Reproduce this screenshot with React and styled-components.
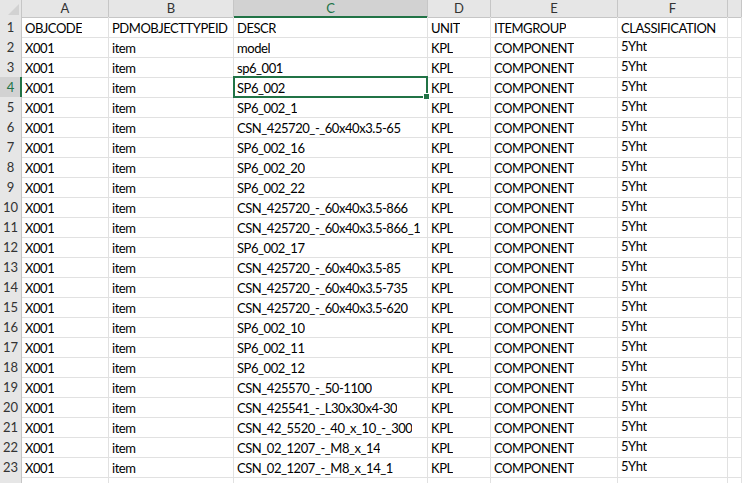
import React from "react";
import styled, { createGlobalStyle, css } from "styled-components";

const GREEN = "#217346";
const GRID = "#e1e1e1";
const HEAD_BORDER = "#c6c6c6";

const Global = createGlobalStyle`
  html, body { margin: 0; padding: 0; background: #fff; overflow: hidden; }
  body { font-family: Lato, "Liberation Sans", sans-serif; }
`;

const COLS = "22px 87px 125px 194px 63px 127px 110px 1fr";

const Sheet = styled.div`
  width: 742px;
  height: 483px;
  overflow: hidden;
  background: #fff;
`;

const Row = styled.div`
  display: grid;
  grid-template-columns: ${COLS};
  height: ${(p) => (p.$head ? 17 : 20)}px;
`;

const Corner = styled.div`
  background: #e6e6e6;
  border-right: 1px solid ${HEAD_BORDER};
  border-bottom: 1px solid ${HEAD_BORDER};
  box-sizing: border-box;
  display: flex;
  align-items: flex-end;
  justify-content: flex-end;
  padding: 0 2px 2px 0;
`;

const ColHead = styled.div`
  box-sizing: border-box;
  background: ${(p) => (p.$sel ? "#d2d2d2" : "#e6e6e6")};
  color: ${(p) => (p.$sel ? GREEN : "#333")};
  border-right: 1px solid ${HEAD_BORDER};
  border-bottom: ${(p) => (p.$sel ? `2px solid ${GREEN}` : `1px solid ${HEAD_BORDER}`)};
  font-size: 13px;
  line-height: 16px;
  text-align: center;
`;

const RowHead = styled.div`
  box-sizing: border-box;
  background: ${(p) => (p.$sel ? "#d2d2d2" : "#e6e6e6")};
  color: ${(p) => (p.$sel ? GREEN : "#333")};
  border-right: ${(p) => (p.$sel ? `2px solid ${GREEN}` : `1px solid ${HEAD_BORDER}`)};
  border-bottom: 1px solid ${HEAD_BORDER};
  font-size: 13px;
  line-height: 20px;
  text-align: center;
  padding-left: ${(p) => (p.$sel ? 1 : 0)}px;
`;

const Cell = styled.div`
  position: relative;
  box-sizing: border-box;
  border-right: 1px solid ${GRID};
  border-bottom: 1px solid ${GRID};
  font-size: 13px;
  letter-spacing: -0.45px;
  color: #000;
  padding: 0 1px 0 3px;
  white-space: nowrap;
  display: flex;
  align-items: flex-end;
  padding-bottom: ${(p) => (p.$raised ? 3 : 1)}px;
  line-height: 16px;
  ${(p) =>
    p.$active &&
    css`
      z-index: 2;
      &::after {
        content: "";
        position: absolute;
        left: -1px;
        top: -1px;
        right: -1px;
        bottom: -1px;
        border: 2px solid ${GREEN};
      }
    `}
`;

const Text = styled.span`
  display: block;
  overflow: hidden;
  min-width: 0;
`;

const Handle = styled.span`
  position: absolute;
  right: -3px;
  bottom: -3px;
  width: 5px;
  height: 5px;
  background: ${GREEN};
  border: 1px solid #fff;
  z-index: 3;
`;

const rows = [
  ["OBJCODE", "PDMOBJECTTYPEID", "DESCR", "UNIT", "ITEMGROUP", "CLASSIFICATION"],
  ["X001", "item", "model", "KPL", "COMPONENT", "5Yht"],
  ["X001", "item", "sp6_001", "KPL", "COMPONENT", "5Yht"],
  ["X001", "item", "SP6_002", "KPL", "COMPONENT", "5Yht"],
  ["X001", "item", "SP6_002_1", "KPL", "COMPONENT", "5Yht"],
  ["X001", "item", "CSN_425720_-_60x40x3.5-65", "KPL", "COMPONENT", "5Yht"],
  ["X001", "item", "SP6_002_16", "KPL", "COMPONENT", "5Yht"],
  ["X001", "item", "SP6_002_20", "KPL", "COMPONENT", "5Yht"],
  ["X001", "item", "SP6_002_22", "KPL", "COMPONENT", "5Yht"],
  ["X001", "item", "CSN_425720_-_60x40x3.5-866", "KPL", "COMPONENT", "5Yht"],
  ["X001", "item", "CSN_425720_-_60x40x3.5-866_1", "KPL", "COMPONENT", "5Yht"],
  ["X001", "item", "SP6_002_17", "KPL", "COMPONENT", "5Yht"],
  ["X001", "item", "CSN_425720_-_60x40x3.5-85", "KPL", "COMPONENT", "5Yht"],
  ["X001", "item", "CSN_425720_-_60x40x3.5-735", "KPL", "COMPONENT", "5Yht"],
  ["X001", "item", "CSN_425720_-_60x40x3.5-620", "KPL", "COMPONENT", "5Yht"],
  ["X001", "item", "SP6_002_10", "KPL", "COMPONENT", "5Yht"],
  ["X001", "item", "SP6_002_11", "KPL", "COMPONENT", "5Yht"],
  ["X001", "item", "SP6_002_12", "KPL", "COMPONENT", "5Yht"],
  ["X001", "item", "CSN_425570_-_50-1100", "KPL", "COMPONENT", "5Yht"],
  ["X001", "item", "CSN_425541_-_L30x30x4-30", "KPL", "COMPONENT", "5Yht"],
  ["X001", "item", "CSN_42_5520_-_40_x_10_-_300", "KPL", "COMPONENT", "5Yht"],
  ["X001", "item", "CSN_02_1207_-_M8_x_14", "KPL", "COMPONENT", "5Yht"],
  ["X001", "item", "CSN_02_1207_-_M8_x_14_1", "KPL", "COMPONENT", "5Yht"],
];

const letters = ["A", "B", "C", "D", "E", "F", ""];

export default function App() {
  return (
    <>
      <Global />
      <Sheet>
        <Row $head>
          <Corner>
            <svg width="11" height="11" viewBox="0 0 11 11">
              <polygon points="11,0 11,11 0,11" fill="#d2d2d2" />
            </svg>
          </Corner>
          {letters.map((l, i) => (
            <ColHead key={i} $sel={l === "C"}>
              {l}
            </ColHead>
          ))}
        </Row>
        {rows.map((r, i) => {
          const n = i + 1;
          return (
            <Row key={n}>
              <RowHead $sel={n === 4}>{n}</RowHead>
              {r.map((v, j) => (
                <Cell key={j} $active={n === 4 && j === 2} $raised={j === 5 && n > 1}>
                  <Text>{v}</Text>
                  {n === 4 && j === 2 && <Handle />}
                </Cell>
              ))}
              <Cell />
            </Row>
          );
        })}
        <Row>
          <RowHead />
          {letters.map((_, j) => (
            <Cell key={j} />
          ))}
        </Row>
      </Sheet>
    </>
  );
}
